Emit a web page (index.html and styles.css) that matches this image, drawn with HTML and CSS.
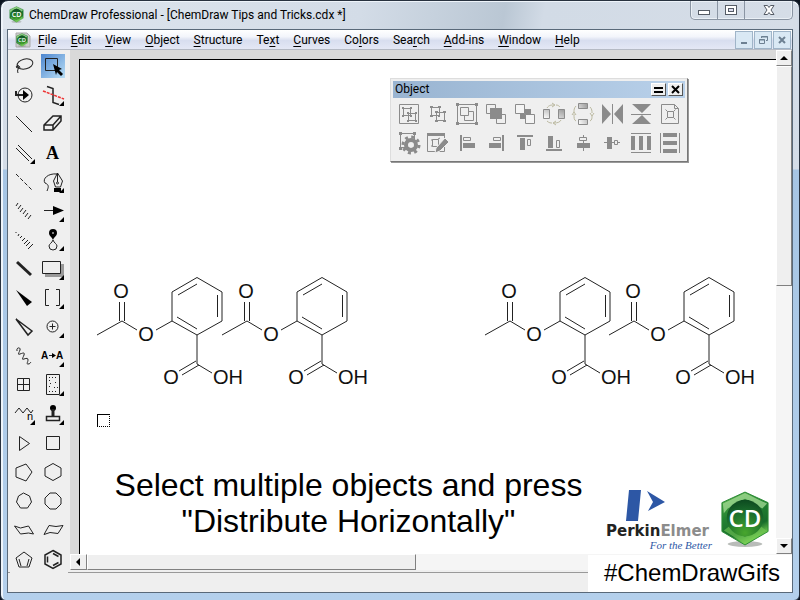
FILE: index.html
```html
<!DOCTYPE html>
<html lang="en">
<head>
<meta charset="utf-8">
<title>ChemDraw Professional</title>
<link rel="stylesheet" href="styles.css">
</head>
<body>
<svg class="defs" aria-hidden="true">
  <defs>
    <linearGradient id="green" x1="0" y1="0" x2="0.4" y2="1"><stop offset="0" stop-color="#5db84a"/><stop offset="0.45" stop-color="#238232"/><stop offset="0.8" stop-color="#176c2b"/><stop offset="1" stop-color="#75cf51"/></linearGradient>
    <radialGradient id="disc" cx="0.5" cy="0.9" r="0.9"><stop offset="0" stop-color="#48a62d"/><stop offset="0.6" stop-color="#1c702d"/><stop offset="1" stop-color="#0d4a20"/></radialGradient>
    <linearGradient id="fade" x1="1" y1="0" x2="0" y2="1"><stop offset="0" stop-color="#999"/><stop offset="1" stop-color="#fff"/></linearGradient>
    <symbol id="badge" viewBox="0 0 52 60">
      <ellipse cx="26" cy="56" rx="18" ry="3" fill="#8a8f8a" opacity="0.6"/>
      <path d="M26 2 50 13 50 43 26 57 2 43 2 13Z" fill="url(#green)" stroke="#2b8a35" stroke-linejoin="round"/>
      <path d="M3 14 26 3 49 14 44 19 26 9 8 19 4 24Z" fill="#a6dc97" opacity="0.75"/>
      <path d="M4 42 9 38 26 49 43 38 48 42 26 56Z" fill="#77c956" opacity="0.6"/>
      <circle cx="26" cy="29" r="19" fill="url(#disc)"/>
      <text x="26" y="38" text-anchor="middle" class="badge-text">CD</text>
    </symbol>
    <symbol id="aspirin" viewBox="0 0 156 120">
      <path class="bond" d="M7 65 32 51 47 60M29.500 51V32M34.500 51V32M66 60 82 51V22L107 7.500 132 22V51L107 65 82 51M88 25 107 14M127.500 25V47M87 47 107 59M107 65V94L122 103M106 91 89 101M109 95 92 105"/>
      <g class="atom"><text x="31" y="28" text-anchor="middle">O</text><text x="56" y="71" text-anchor="middle">O</text><text x="81" y="114" text-anchor="middle">O</text><text x="123" y="114">OH</text></g>
    </symbol>
  </defs>
</svg>
<div class="window">
  <header class="titlebar">
    <svg class="app-icon"><use href="#badge"/></svg>
    <h1>ChemDraw Professional - [ChemDraw Tips and Tricks.cdx *]</h1>
    <div class="caption-buttons">
      <button aria-label="Minimize"><svg width="14" height="14"><rect x="1.500" y="7.500" width="11" height="4" fill="#fff" stroke="#555c66"/></svg></button>
      <button aria-label="Maximize"><svg width="14" height="14"><rect x="1.500" y="2.500" width="11" height="9" fill="#fff" stroke="#555c66"/><rect x="4.500" y="5.500" width="5" height="3" fill="#dde" stroke="#555c66"/></svg></button>
      <button aria-label="Close" class="wide"><svg width="14" height="14"><path d="M2 2.500h3.500l1.500 2 1.500-2H12L9 7l3 4.500H8.500L7 9.500l-1.500 2H2L5 7z" fill="#fff" stroke="#555c66"/></svg></button>
    </div>
  </header>
  <div class="client">
    <nav class="menubar">
      <svg class="doc-icon" viewBox="0 0 16 16"><path d="M1 1h11l3 3v11H1z" fill="#ccc" stroke="#aaa"/><use href="#badge" x="1" y="1" width="12" height="14"/></svg>
      <button><u>F</u>ile</button><button><u>E</u>dit</button><button><u>V</u>iew</button><button><u>O</u>bject</button><button><u>S</u>tructure</button><button>Te<u>x</u>t</button><button><u>C</u>urves</button><button>Co<u>l</u>ors</button><button>Sea<u>r</u>ch</button><button><u>A</u>dd-ins</button><button><u>W</u>indow</button><button><u>H</u>elp</button>
      <div class="mdi-buttons">
        <button aria-label="Minimize document"><svg width="12" height="12"><path d="M3 9h6" stroke="#6d8092" stroke-width="2"/></svg></button>
        <button aria-label="Restore document"><svg width="12" height="12" fill="none" stroke="#6d8092"><path d="M4.500 4V2.500h6v4H9M4 3h7M2.500 5.500h5v4h-5zM2 6h6"/></svg></button>
        <button aria-label="Close document"><svg width="12" height="12"><path d="M3 3l6 6M9 3l-6 6" stroke="#6d8092" stroke-width="2"/></svg></button>
      </div>
    </nav>
    <div class="workspace">
      <div class="tools" role="toolbar" aria-label="Main tools">
        <button aria-label="Lasso"><svg><ellipse cx="15" cy="12" rx="8" ry="5" transform="rotate(-14 15 12)"/><path d="M9 16c-4 1-3-4 0-2 3 3-3 1-1 7M6 15h3"/></svg></button>
        <button aria-label="Marquee" class="selected"><svg><path d="M6.500 6.500h12v12h-12z"/><path class="f" d="M14 12l9 5-3 1 4 4-2 2-4-4-1 3z"/></svg></button>
        <button aria-label="Structure perspective"><svg><circle cx="15" cy="14" r="7"/><path d="M5 14h9M6 10v3" stroke-width="2"/><path class="f" d="M13 9l6 5-6 5z"/></svg></button>
        <button aria-label="Mass fragmentation"><svg><path d="M8 5.500l6 2v14l6 2" stroke-width="1.500"/><path d="M4 10l21 8" stroke="#e33" stroke-width="1.500" stroke-dasharray="3 1"/><path class="f" d="M25 20v5h-5z"/></svg></button>
        <button aria-label="Solid bond"><svg><path d="M6 6l16 16"/></svg></button>
        <button aria-label="Eraser"><svg><path d="M5 20v-5l9-9h8v5l-8 9zM5 15h9l8-9M14 15v5" stroke-width="1.500"/></svg></button>
        <button aria-label="Multiple bonds"><svg><path d="M6 9l13 13M8 6l14 14"/><path class="f" d="M25 20v5h-5z"/></svg></button>
        <button aria-label="Text" class="letter">A</button>
        <button aria-label="Dashed bond"><svg><path d="M6 6l16 16" stroke-dasharray="4 2"/></svg></button>
        <button aria-label="Pen"><svg><path d="M18 6C9 5 3 11 6 15c5 2 3 5 2 8M18.500 5l-4 8 2 6h5l2-6zM18.500 5v9"/><circle cx="18.500" cy="15" r="1"/><path class="f" d="M15 20h7v4h-7zM25 20v5h-5z"/></svg></button>
        <button aria-label="Hashed bond"><svg><path d="M8 6l-2 3M11 8l-3 4M13 11l-3 4M16 13l-3 4M18 16l-3 4M21 18l-3 4"/></svg></button>
        <button aria-label="Arrow"><svg><path d="M5 13.500h12"/><path class="f" d="M14 9l11 4.500L14 18zM25 20v5h-5z"/></svg></button>
        <button aria-label="Hashed wedge bond"><svg><path d="M6 6v1M9 8l-1 2M12 10l-2 2M15 12l-3 3M18 14l-4 4M20 16l-4 4M23 18l-5 5"/></svg></button>
        <button aria-label="Orbital"><svg><path class="f" d="M14 14c-1-3-4-4-4-7a4 4 0 0 1 8 0c0 3-3 4-4 7z"/><circle cx="14" cy="7" r="1" fill="#aaa" stroke="none"/><path d="M14 14c-1 3-4 4-4 6a4 4 0 0 0 8 0c0-2-3-3-4-6z"/><path class="f" d="M25 20v5h-5z"/></svg></button>
        <button aria-label="Bold bond"><svg><path d="M7 7l14 13" stroke-width="3"/></svg></button>
        <button aria-label="Rectangle"><svg><path d="M6 9h19v13H6z" fill="#999" stroke="none"/><path d="M3.500 6.500h18v12h-18z" fill="#eee"/><path class="f" d="M25 20v5h-5z"/></svg></button>
        <button aria-label="Wedge bond"><svg><path class="f" d="M6 6l16 12-5 4z"/></svg></button>
        <button aria-label="Brackets"><svg><path d="M10 5.500H6.500v16H10M17 5.500h3.500v16H17"/><path class="f" d="M25 20v5h-5z"/></svg></button>
        <button aria-label="Hollow wedge bond"><svg><path d="M6 6l16 12-4 4z" stroke-width="1.500"/></svg></button>
        <button aria-label="Charge"><svg><circle cx="13.500" cy="13.500" r="5.500"/><path d="M10.500 13.500h6M13.500 10.500v6"/><path class="f" d="M25 20v5h-5z"/></svg></button>
        <button aria-label="Wavy bond"><svg><path d="M7 9c-1-4 4-4 3-1s-3 5 0 4 5-2 4 1-3 5 0 4 4-1 4 1-2 4 0 4 2-1 3-2"/></svg></button>
        <button aria-label="Atom map"><svg><text x="2" y="17" class="map">A</text><text x="17" y="17" class="map">A</text><path d="M10 13.500h5"/><path class="f" d="M13 11l4 2.500-4 2.500zM25 20v5h-5z"/></svg></button>
        <button aria-label="Table"><svg><path d="M7.500 7.500h12v12h-12zM13.500 7.500v12M7.500 13.500h12"/></svg></button>
        <button aria-label="Template panel"><svg><path d="M7.500 3.500h13v20h-13z"/><path d="M10 6.500h9M10 9.500h3M11 12.500h3M16 11.500h3M10 15.500h2M15 16.500h4M10 20.500h9" stroke-dasharray="1 2"/><path class="f" d="M25 20v5h-5z"/></svg></button>
        <button aria-label="Chain"><svg><path d="M5 13l4-5 4 5 4-5 4 5 2-3"/><text x="17" y="20" class="sub">n</text><path class="f" d="M25 20v5h-5z"/></svg></button>
        <button aria-label="Stamp"><svg><circle class="f" cx="14" cy="8" r="3"/><path d="M14 9v7" stroke-width="3"/><path d="M7.500 16.500h13v4h-13z" stroke-width="1.500"/><path class="f" d="M25 20v5h-5z"/></svg></button>
        <button aria-label="Cyclopropane"><svg><path d="M9.500 7.500l10 7-10 7z"/></svg></button>
        <button aria-label="Cyclobutane"><svg><path d="M7.500 7.500h13v13h-13z"/></svg></button>
        <button aria-label="Cyclopentane"><svg><path d="M6 10l10-4 6 8-6 9-10-4z"/></svg></button>
        <button aria-label="Cyclohexane"><svg><path d="M14 5.500l8 4.500v8l-8 4.500L6 18v-8z"/></svg></button>
        <button aria-label="Cycloheptane"><svg><path d="M13.500 6l6 3 2 6-4 6h-7l-4-6 2-6z"/></svg></button>
        <button aria-label="Cyclooctane"><svg><path d="M11 6h6l5 5v6l-5 5h-6l-5-5v-6z"/></svg></button>
        <button aria-label="Chair, left"><svg><path d="M4.500 10l6 2 8-2 5 8-5-1-8 1z"/></svg></button>
        <button aria-label="Chair, right"><svg><path d="M24 9.500l-5 8-8-1-6 2 5-9 7 1z"/></svg></button>
        <button aria-label="Cyclopentadiene"><svg><path d="M14 7l8 6-3 9H9l-3-9zM19 14l-2 7M9 14l2 7"/></svg></button>
        <button aria-label="Benzene"><svg><path stroke-width="1.500" d="M14 5.500l8 4.500v9l-8 4.500L6 19v-9zM8.500 11.500v6M14 8.500l5.500 3M14 20.500l5.500-3"/></svg></button>
      </div>
      <main class="document">
        <section class="page">
          <svg class="molecule m1"><use href="#aspirin"/></svg>
          <svg class="molecule m2"><use href="#aspirin"/></svg>
          <svg class="molecule m3"><use href="#aspirin"/></svg>
          <svg class="molecule m4"><use href="#aspirin"/></svg>
          <div class="caret-box"></div>
          <p class="tip">Select multiple objects and press<br>"Distribute Horizontally"</p>
        </section>
        <div class="vscroll"><button aria-label="Scroll up"><svg width="8" height="5"><path d="M4 0l4 4H0z"/></svg></button><div class="thumb"></div><button aria-label="Scroll down"><svg width="8" height="5"><path d="M0 0h8L4 4z"/></svg></button></div>
        <div class="hscroll"><button aria-label="Scroll left"><svg width="5" height="8"><path d="M4 0v8L0 4z"/></svg></button><div class="thumb"></div></div>
      </main>
    </div>
    <footer class="status"></footer>

    <section class="palette" aria-label="Object">
      <header><h2>Object</h2><button aria-label="Dock"><svg width="11" height="9"><path d="M1 3h9M1 7h9" stroke="#000" stroke-width="2"/></svg></button><button aria-label="Close palette"><svg width="11" height="9"><path d="M2 1l7 7M9 1L2 8" stroke="#000" stroke-width="2"/></svg></button></header>
      <div class="commands">
        <button aria-label="Group"><svg><path d="M5.500 5.500h19v19h-19zM9.500 9.500h7v7h-7zM14.500 14.500h7v7h-7z"/><path class="h" d="M8 8h2v2H8zM16 8h2v2h-2zM8 16h2v2H8zM16 16h2v2h-2zM13 13h2v2h-2zM21 13h2v2h-2zM13 21h2v2h-2zM21 21h2v2h-2z"/></svg></button>
        <button aria-label="Ungroup"><svg><path d="M8.500 8.500h8v8h-8zM13.500 13.500h8v8h-8z"/><path class="h" d="M7 7h3v2H7zM15 7h3v2h-3zM7 16h3v2H7zM15 16h2v2h-2zM12 12h3v2h-3zM20 12h3v2h-3zM12 21h3v2h-3zM20 21h3v2h-3z"/></svg></button>
        <button aria-label="Integral group"><svg><path d="M5.500 5.500h19v19h-19zM12.500 12.500h9v9h-9z"/><path d="M8.500 8.500h8v8h-8z" fill="#efefef"/><path class="h" d="M4 4h3v3H4zM23 4h3v3h-3zM4 23h3v3H4zM23 23h3v3h-3z"/></svg></button>
        <button aria-label="Bring to front"><svg><path d="M5.500 5.500h9v9h-9zM15.500 15.500h9v9h-9z"/><path class="h" d="M9 9h12v11H9z"/></svg></button>
        <button aria-label="Send to back"><svg><path class="h" d="M10 10h11v10H10z"/><path fill="#f4f4f4" d="M5.500 5.500h9v9h-9zM15.500 15.500h9v9h-9z"/></svg></button>
        <button aria-label="Rotate horizontally"><svg><path fill="url(#fade)" d="M4.500 10.500h6v9h-6zM19.500 10.500h6v9h-6z"/><path d="M8 9c2-3 4-3 7-3M21 8c-1-1-2-2-4-2M8 22c2 2 4 2 5 2M22 21c-1 2-3 3-7 3M13 4l3 2-3 2M17 22l-3 2 3 2" stroke="#bbb9a0"/></svg></button>
        <button aria-label="Rotate vertically"><svg><path fill="url(#fade)" d="M10.500 4.500h9v5h-9zM10.500 20.500h9v5h-9z"/><path d="M8 7c-2 2-2 4-2 6M8 22c-2-1-2-3-2-7M22 8c2 2 2 4 2 6M22 22c2-1 2-3 2-5M4 16l2-3 2 3M22 14l2 3 2-3" stroke="#bbb9a0"/></svg></button>
        <button aria-label="Flip horizontal"><svg><path class="h" d="M5 5l9 10-9 10zM26 5l-9 10 9 10z"/><path d="M15.500 5v20"/></svg></button>
        <button aria-label="Flip vertical"><svg><path class="h" d="M6 5h19l-9 9zM6 25h19l-9-9z"/><path d="M5 15.500h20"/></svg></button>
        <button aria-label="Center on page"><svg><path d="M6.500 5.500h13l4 4v15h-17zM12.500 12.500h6v6h-6zM10.500 10.500l2 2M20.500 10.500l-2 2M10.500 20.500l2-2M20.500 20.500l-2-2M19.500 5.500v4h4"/></svg></button>
        <button aria-label="Object settings"><svg><path d="M6.500 5.500h14v14h-14z"/><path class="h" d="M5 4h3v3H5zM19 4h3v3h-3zM5 19h3v3H5z"/><circle cx="17" cy="17" r="3" fill="#efefef" stroke="none"/><circle cx="17" cy="17" r="5" stroke-width="4"/><circle cx="17" cy="17" r="8" stroke-width="3" stroke-dasharray="3 3.280"/></svg></button>
        <button aria-label="Edit style"><svg><path d="M4.500 5.500h17v18h-17z"/><path class="h" d="M4 5h18v3H4z"/><path d="M9.500 11.500h6v7h-6zM8 12h2M8 18h2M15 11l2-1"/><path class="h" stroke="#efefef" d="M13 20l9-10 4 4-9 9-5 2z"/></svg></button>
        <button aria-label="Align left"><svg><path class="h" d="M8 7h2v16H8zM11 15h12v5H11z"/><path d="M11.500 9.500h7v3h-7z"/></svg></button>
        <button aria-label="Align right"><svg><path class="h" d="M21 7h2v16h-2zM8 15h12v5H8z"/><path d="M12.500 9.500h7v3h-7z"/></svg></button>
        <button aria-label="Align top"><svg><path class="h" d="M7 7h16v2H7zM10 10h5v12h-5z"/><path d="M17.500 11.500h3v6h-3z"/></svg></button>
        <button aria-label="Align bottom"><svg><path class="h" d="M7 21h16v2H7zM9 8h5v12H9z"/><path d="M17.500 12.500h3v7h-3z"/></svg></button>
        <button aria-label="Align centers horizontally"><svg><path d="M15.500 7v16"/><path class="h" d="M9 15h13v5H9z"/><path fill="#efefef" d="M11.500 9.500h7v3h-7z"/></svg></button>
        <button aria-label="Align centers vertically"><svg><path d="M7 14.500h16"/><path class="h" d="M10 9h5v12h-5z"/><path fill="#efefef" d="M17.500 12.500h3v4h-3z"/></svg></button>
        <button aria-label="Distribute horizontally"><svg><path d="M5 5.500h20M5 24.500h20"/><path class="h" d="M5 8h4v14H5zM13 8h4v14h-4zM21 8h4v14h-4z"/></svg></button>
        <button aria-label="Distribute vertically"><svg><path d="M5.500 5v20M24.500 5v20"/><path class="h" d="M8 5h14v4H8zM8 13h14v4H8zM8 21h14v4H8z"/></svg></button>
      </div>
    </section>

    <aside class="brand">
      <div class="logos">
        <div class="perkin">
          <svg width="42" height="34"><path fill="#2d57a5" d="M5 1h12l-3 31H2zM23 2l18 11-17 9 5-9z"/></svg>
          <div class="name"><b>Perkin</b>Elmer</div>
          <div class="motto">For the Better</div>
        </div>
        <svg class="cd"><use href="#badge"/></svg>
      </div>
      <div class="hashtag">#ChemDrawGifs</div>
    </aside>
  </div>
</div>
</body>
</html>
```

FILE: styles.css
```css
* { box-sizing: border-box; }
body {
  margin: 0;
  background: #0b1420;
  color: #000;
  font: 12px/16px Roboto, "Open Sans", sans-serif;
}
h1, h2, p { margin: 0; font-weight: 400; }
button { margin: 0; padding: 0; border: 0; background: none; color: inherit; font: inherit; }
svg { display: block; }
.defs { position: absolute; width: 0; height: 0; }
.badge-text { font: 600 25px "Open Sans", sans-serif; fill: #fff; }

.window {
  display: flex;
  flex-direction: column;
  min-height: 100vh;
  padding: 0 6px 7px;
  border: 1px solid #28323f;
  border-radius: 8px 8px 6px 6px;
  background: linear-gradient(#d2dbe6 0, #d4dde8 168px, #a6c5e4 169px, #b4d0ec 100%);
  box-shadow: inset 1px 1px 0 1px #eef4fa;
}

.titlebar {
  display: flex;
  height: 27px;
  margin: 1px -4px 0;
  padding: 0 4px 0 6px;
  border-radius: 6px 6px 0 0;
  background: linear-gradient(100deg, #dfe6ee 0, #d3dce7 45%, #bac7d4 63%, #d2dbe6 68%, #d5dde7 100%);
}
.app-icon { width: 15px; height: 17px; margin-top: 4px; }
.titlebar h1 { flex: 1; margin: 5px 0 0 5px; font-size: 12px; }
.caption-buttons {
  display: flex;
  height: 19px;
  margin-top: -1px;
  border: 1px solid #8a95a3;
  border-top: 0;
  border-radius: 0 0 5px 5px;
  box-shadow: inset 0 0 0 1px #eaf0f6;
}
.caption-buttons button { display: grid; place-items: center; width: 27px; border-right: 1px solid #8a95a3; }
.caption-buttons .wide { width: 47px; border: 0; }

.client {
  position: relative;
  flex: 1;
  display: flex;
  flex-direction: column;
  border: 1px solid #596979;
  background: #efefef;
}
.menubar {
  display: flex;
  align-items: center;
  gap: 14px;
  height: 20px;
  padding-left: 7px;
  border-bottom: 1px solid #b5bac4;
  background: linear-gradient(#fff 0, #f3f5fb 35%, #d8deef 55%, #e4e8f5 100%);
}
.doc-icon { width: 16px; height: 16px; margin-right: -7px; }
.menubar u { text-decoration-thickness: 1px; text-underline-offset: 2px; }
.mdi-buttons { display: flex; gap: 1px; margin-left: auto; padding-right: 1px; }
.mdi-buttons button { display: grid; place-items: center; width: 18px; height: 18px; border: 1px solid #9fb4c8; background: #d9e8f4; }

.workspace { flex: 1; display: flex; min-height: 0; }
.tools {
  position: relative;
  z-index: 1;
  display: grid;
  grid-template-columns: 29px 29px;
  grid-auto-rows: 29px;
  align-content: start;
  width: 62px;
  padding: 2px 2px 0;
  margin-bottom: -2px;
}
.tools svg { width: 29px; height: 29px; fill: none; stroke: #222; }
.tools .f { fill: #000; stroke: none; }
.tools .map { font: 700 10px "Liberation Sans", sans-serif; fill: #000; stroke: none; }
.tools .sub { font: 11px "Liberation Sans", sans-serif; fill: #000; stroke: none; }
.tools .letter { font: 700 18px "Liberation Serif", serif; padding-right: 2px; }
.tools .selected {
  background: linear-gradient(135deg, #4d86cf, #b9def5) content-box;
  padding: 2px 3px 3px 2px;
}
.tools .selected svg { margin: -2px; }
.tools button:nth-last-child(-n+2) { background: #efefef; }

.document {
  flex: 1;
  display: grid;
  grid-template-columns: 1fr 16px;
  grid-template-rows: 1fr 16px;
  min-width: 0;
  padding-bottom: 2px;
}
.page {
  position: relative;
  border: solid #d9d9d9;
  border-width: 9px 0 0 9px;
  background: #fff;
  box-shadow: inset 1px 1px 0 #000;
}
.molecule { position: absolute; top: 211px; width: 156px; height: 120px; }
.m1 { left: 11px; }
.m2 { left: 136px; }
.m3 { left: 399px; }
.m4 { left: 523px; }
.bond { fill: none; stroke: #222; }
.atom { font: 20px "Liberation Sans", sans-serif; fill: #111; }
.caret-box {
  position: absolute;
  left: 18px;
  top: 355px;
  width: 13px;
  height: 13px;
  border: 1px solid #000;
  border-right-style: dotted;
  border-bottom-style: dotted;
}
.tip {
  padding: 408px 158px 0 0;
  font: 32px/36px "Liberation Sans", sans-serif;
  text-align: center;
}

.vscroll, .hscroll { display: flex; background: #f5f5f5; }
.vscroll { flex-direction: column; }
.vscroll button, .hscroll button, .thumb {
  display: grid;
  place-items: center;
  border: 1px solid;
  border-color: #fff #808080 #808080 #fff;
  background: #efefef;
}
.vscroll button { height: 16px; }
.vscroll .thumb { height: 220px; }
.vscroll button:last-child { margin-top: auto; }
.hscroll { grid-column: 1 / -1; }
.hscroll button { width: 17px; }
.hscroll .thumb { width: 329px; }

.status { height: 20px; border-top: 1px solid #999; }

.palette {
  position: absolute;
  z-index: 2;
  left: 382px;
  top: 48px;
  padding: 2px;
  border: 1px solid;
  border-color: #ddd #777 #777 #ddd;
  background: #efefef;
  box-shadow: 1px 1px 0 #999;
}
.palette header {
  display: flex;
  align-items: center;
  gap: 2px;
  height: 17px;
  padding-right: 2px;
  background: linear-gradient(90deg, #99b4d1, #b9d1ea);
}
.palette h2 { flex: 1; padding-left: 2px; font-size: 12px; line-height: 17px; }
.palette header button { display: grid; place-items: center; width: 15px; height: 13px; border: 1px solid; border-color: #fff #555 #555 #fff; background: #efefef; }
.commands { display: grid; grid-template-columns: repeat(10, 29px); padding: 1px 1px 2px; }
.commands svg { width: 29px; height: 29px; fill: none; stroke: #8b8b8b; }
.commands .h { fill: #8b8b8b; }
.commands path.h:not([stroke]) { stroke: none; }

.brand { position: absolute; z-index: 2; right: 0; bottom: 0; width: 204px; }
.logos { display: flex; gap: 8px; height: 66px; padding-left: 18px; }
.perkin { width: 106px; }
.perkin svg { margin-left: 18px; }
.name { font: 700 15px/16px "DejaVu Sans", sans-serif; color: #8c8c8c; }
.name b { color: #222; }
.motto { font: italic 11px/12px "Liberation Serif", serif; color: #2d57a5; text-align: right; }
.cd { width: 50px; height: 60px; }
.hashtag { height: 37px; padding-left: 16px; background: #fff; font: 24px/36px "Liberation Sans", sans-serif; }
```
